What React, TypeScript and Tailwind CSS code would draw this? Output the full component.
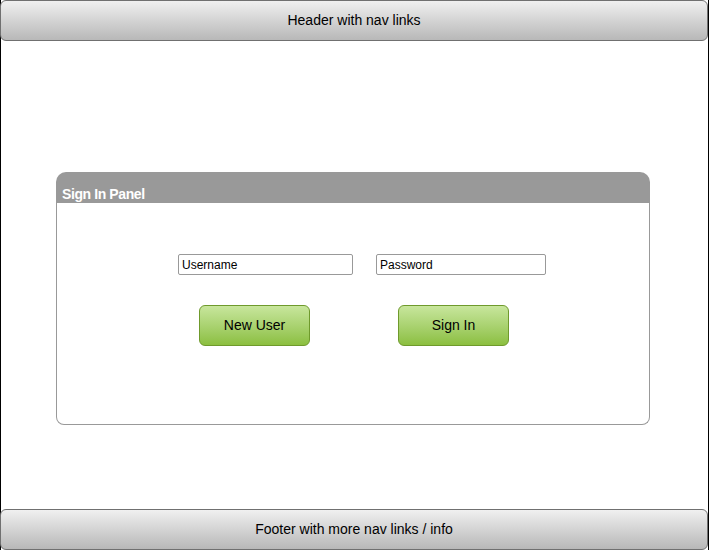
const font = { fontFamily: '"Liberation Sans", Arial, sans-serif' };

const Bar = ({ children }: { children: string }) => (
  <div className="h-[41px] w-[708px] shrink-0 rounded-[6px] border border-[#707070] bg-gradient-to-b from-[#f0f0f0] to-[#b8b8b8] flex items-center justify-center text-[14px] text-black">
    {children}
  </div>
);

const GreenButton = ({ label, className }: { label: string; className?: string }) => (
  <button
    className={
      "h-[41px] w-[111px] rounded-[6px] border border-[#6f9a2c] bg-gradient-to-b from-[#c8e69c] to-[#8cbf3f] text-[14px] text-black " +
      (className ?? "")
    }
  >
    {label}
  </button>
);

export default function App() {
  return (
    <div className="h-[550px] w-[709px] bg-white border-x border-black flex flex-col relative" style={font}>
      <div className="-ml-px">
        <Bar>Header with nav links</Bar>
      </div>

      <div className="flex-1 pt-[131px] pl-[55px]">
        <div className="w-[594px]">
          <div className="h-[31px] rounded-t-[10px] bg-[#999999] flex items-end pb-[2px] pl-[6px]">
            <span className="text-[14px] leading-[14px] font-bold text-white tracking-[-0.4px]">Sign In Panel</span>
          </div>
          <div className="h-[222px] rounded-b-[8px] border border-t-0 border-[#999999] pt-[51px] pl-[121px]">
            <div className="grid grid-cols-[175px_170px] gap-x-[23px] gap-y-[30px]">
              <input
                className="h-[21px] rounded-[2px] border border-[#999999] px-[3px] text-[12px] text-black placeholder:text-black outline-none"
                placeholder="Username"
              />
              <input
                className="h-[21px] rounded-[2px] border border-[#999999] px-[3px] text-[12px] text-black placeholder:text-black outline-none"
                placeholder="Password"
              />
              <GreenButton label="New User" className="ml-[21px]" />
              <GreenButton label="Sign In" className="ml-[22px]" />
            </div>
          </div>
        </div>
      </div>

      <div className="-ml-px">
        <Bar>Footer with more nav links / info</Bar>
      </div>
    </div>
  );
}
